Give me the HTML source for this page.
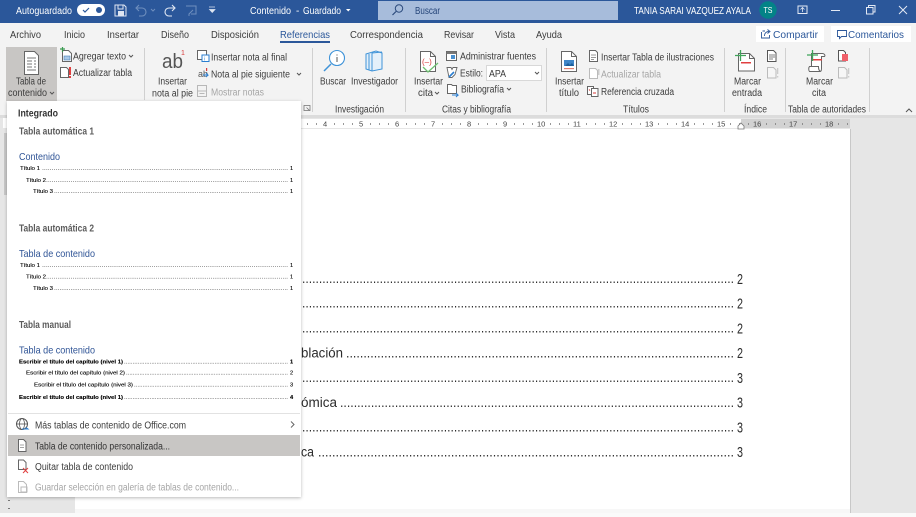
<!DOCTYPE html>
<html lang="es"><head><meta charset="utf-8"><title>Contenido - Word</title>
<style>
html,body{margin:0;padding:0;background:#fff;width:916px;height:517px;overflow:hidden}
svg{display:block;filter:blur(.35px)}
text{font-family:"Liberation Sans",sans-serif;font-size:10px;fill:#3c3c3c;white-space:pre}
.w{fill:#fff}.g{fill:#a6a6a6}.b{font-weight:bold}.blue{fill:#2f5496;font-size:10.5px}
.h{fill:#5c5c5c;font-weight:bold;font-size:10px}.t{font-size:5.6px;fill:#000;stroke:#000;stroke-width:.12}.d{font-size:5.6px;fill:#222}
.doc{font-size:13.5px;fill:#2c2c2c}.n{font-size:14.5px;fill:#2c2c2c}.r{font-size:7.5px;fill:#444}
</style></head><body>
<svg width="916" height="517" viewBox="0 0 916 517" xmlns="http://www.w3.org/2000/svg">
<defs><filter id="s" x="-5%" y="-5%" width="110%" height="110%"><feDropShadow dx="0" dy="1" stdDeviation="1.5" flood-color="#000" flood-opacity=".28"/></filter></defs>
<!-- backgrounds -->
<rect width="916" height="517" fill="#e6e6e6"/>
<rect y="513" width="916" height="4" fill="#fafafa"/>
<rect width="916" height="23" fill="#2b579a"/>
<rect y="23" width="916" height="92" fill="#f3f3f3"/>
<rect y="115" width="916" height="3" fill="#dcdcdc"/>
<!-- page -->
<rect x="75" y="129" width="775" height="384" fill="#fff"/>
<rect x="850" y="129" width="1" height="384" fill="#c8c8c8"/>
<rect x="75" y="509" width="775" height="4" fill="#f7f7f7"/>
<!-- ruler -->
<rect x="75" y="119" width="666" height="9" fill="#fff"/>
<rect x="741" y="119" width="109" height="9" fill="#d2d2d2"/>
<rect x="3" y="118" width="4" height="10" fill="#fff"/>
<rect x="4" y="133" width="3" height="62" fill="#c8c8c8"/>
<rect x="8" y="500" width="2" height="1" fill="#777"/><rect x="8" y="508" width="2" height="1" fill="#777"/>
<line x1="307" y1="124" x2="325" y2="124" stroke="#777" stroke-width="1.4" stroke-dasharray="1 8"/>
<line x1="334" y1="124" x2="850" y2="124" stroke="#777" stroke-width="1.4" stroke-dasharray="1 8 1 8 1 17"/>
<text class="r" x="323" y="126.500">4</text><text class="r" x="359" y="126.500">5</text><text class="r" x="395" y="126.500">6</text><text class="r" x="431" y="126.500">7</text><text class="r" x="467" y="126.500">8</text><text class="r" x="503" y="126.500">9</text><text class="r" x="537" y="126.500">10</text><text class="r" x="573" y="126.500">11</text><text class="r" x="609" y="126.500">12</text><text class="r" x="645" y="126.500">13</text><text class="r" x="681" y="126.500">14</text><text class="r" x="717" y="126.500">15</text><text class="r" x="753" y="126.500">16</text><text class="r" x="789" y="126.500">17</text><text class="r" x="825" y="126.500">18</text>
<path d="M738 129v-3l3-3 3 3v3z" fill="#fff" stroke="#777" stroke-width=".8"/>

<!-- title bar -->
<text class="w" x="16" y="14" textLength="56" lengthAdjust="spacingAndGlyphs">Autoguardado</text>
<rect x="77" y="4" width="28" height="12" rx="6" fill="#fff"/>
<path d="M83 10l2 2 4-4" fill="none" stroke="#2b579a" stroke-width="1.200"/><circle cx="99" cy="10" r="3" fill="#2b579a"/>
<path d="M115 5h9l2 2v9h-11z" fill="none" stroke="#dfe6f2" stroke-width="1"/><rect x="118" y="5" width="5" height="4" fill="none" stroke="#dfe6f2"/><rect x="118" y="11" width="6" height="5" fill="#dfe6f2"/>
<path d="M139 5l-3 3 3 3M137 8h5a4 4 0 0 1 0 8h-3" fill="none" stroke="#6f8fbe" stroke-width="1.100"/>
<path d="M151 9l2 2 2-2" fill="none" stroke="#6f8fbe"/>
<path d="M172 5l3 3-3 3M174 8h-5a4 4 0 0 0 0 8h3" fill="none" stroke="#e3e9f4" stroke-width="1.100"/>
<path d="M186 6h10v8h-5M193 10l-4 4v2" fill="none" stroke="#6f8fbe" stroke-width="1"/>
<path d="M209 7h6M209.500 9.500h5.500l-2.750 3z" fill="#dfe6f2" stroke="#dfe6f2" stroke-width=".7"/>
<text class="w" x="250" y="14" textLength="41" lengthAdjust="spacingAndGlyphs">Contenido</text>
<text class="w" x="296" y="14">-</text>
<text class="w" x="303" y="14" textLength="38" lengthAdjust="spacingAndGlyphs">Guardado</text>
<path d="M346 9h4.500l-2.250 2.500z" fill="#fff"/>
<rect x="378" y="1" width="240" height="19" fill="#a7bcdb"/>
<circle cx="399" cy="8.500" r="3.700" fill="none" stroke="#2b4a7c" stroke-width="1"/><path d="M396 11.500l-3.500 3.500" stroke="#2b4a7c" stroke-width="1.200"/>
<text x="415" y="14" textLength="25" lengthAdjust="spacingAndGlyphs" style="fill:#26467a">Buscar</text>
<text class="w" x="634" y="14" textLength="117" lengthAdjust="spacingAndGlyphs">TANIA SARAI VAZQUEZ AYALA</text>
<circle cx="768" cy="10" r="8.700" fill="#038387"/>
<text class="w" x="763.500" y="13" style="font-size:8px" textLength="9" lengthAdjust="spacingAndGlyphs">TS</text>
<rect x="798" y="6" width="9" height="7.500" fill="none" stroke="#e3e9f4"/><path d="M802.500 7.500v4.500M800.500 9.500l2-2 2 2" fill="none" stroke="#e3e9f4" stroke-width=".8"/>
<rect x="831" y="10" width="9" height="1" fill="#e3e9f4"/>
<rect x="866.500" y="7.500" width="6.500" height="6.500" fill="none" stroke="#e3e9f4"/><path d="M868.500 7.500v-2h6.500v6.500h-2" fill="none" stroke="#e3e9f4"/>
<path d="M899 6l8 8M907 6l-8 8" stroke="#e3e9f4" stroke-width="1"/>

<!-- tabs -->
<g style="font-size:10.500px">
<text x="10" y="38" textLength="31" lengthAdjust="spacingAndGlyphs" style="font-size:10.500px">Archivo</text>
<text x="64" y="38" textLength="21" lengthAdjust="spacingAndGlyphs" style="font-size:10.500px">Inicio</text>
<text x="107" y="38" textLength="32" lengthAdjust="spacingAndGlyphs" style="font-size:10.500px">Insertar</text>
<text x="161" y="38" textLength="28" lengthAdjust="spacingAndGlyphs" style="font-size:10.500px">Diseño</text>
<text x="211" y="38" textLength="48" lengthAdjust="spacingAndGlyphs" style="font-size:10.500px">Disposición</text>
<text x="280" y="38" textLength="50" lengthAdjust="spacingAndGlyphs" style="fill:#2b579a;font-size:10.500px">Referencias</text>
<text x="350" y="38" textLength="73" lengthAdjust="spacingAndGlyphs" style="font-size:10.500px">Correspondencia</text>
<text x="444" y="38" textLength="30" lengthAdjust="spacingAndGlyphs" style="font-size:10.500px">Revisar</text>
<text x="495" y="38" textLength="20" lengthAdjust="spacingAndGlyphs" style="font-size:10.500px">Vista</text>
<text x="536" y="38" textLength="26" lengthAdjust="spacingAndGlyphs" style="font-size:10.500px">Ayuda</text>
</g>
<rect x="280" y="41" width="50" height="2" fill="#2b579a"/>
<rect x="756" y="26" width="68" height="16" fill="#fff"/>
<path d="M762.500 31h2.500M761.500 32v6h8V35M764.500 36c0-3 2-4.500 4.500-4.500M767.500 29.500l2.500 2-2.500 2" fill="none" stroke="#2b579a" stroke-width=".9"/>
<text x="773" y="38" textLength="45" lengthAdjust="spacingAndGlyphs" style="fill:#2b579a;font-size:10.500px">Compartir</text>
<rect x="831" y="26" width="80" height="16" fill="#fff"/>
<path d="M837.500 30.500h9v6h-5l-2 2v-2h-2z" fill="none" stroke="#2b579a" stroke-width=".9"/>
<text x="848" y="38" textLength="56" lengthAdjust="spacingAndGlyphs" style="fill:#2b579a;font-size:10.500px">Comentarios</text>

<!-- ribbon group 1 -->
<rect x="6" y="47" width="51" height="54" fill="#c8c6c4"/>
<path d="M24.500 51.500h10l4 4v19h-14z" fill="#fff" stroke="#666"/><path d="M27 58h9M27 61h5M34 61h2M27 64h5M34 64h2M27 67h5M34 67h2M27 70h9" stroke="#777" stroke-width=".9"/>
<text x="16" y="84.500" textLength="30" lengthAdjust="spacingAndGlyphs">Tabla de</text>
<text x="8" y="96" textLength="39" lengthAdjust="spacingAndGlyphs">contenido</text>
<path d="M50 92l2 2 2-2" fill="none" stroke="#555"/>
<path d="M62.500 50.500h6l3 3v8h-9z" fill="#fff" stroke="#666"/><path d="M60 49h5M62.500 47v5" stroke="#3a9a50" stroke-width="1.200"/><rect x="64" y="56" width="6" height="4" fill="#a8c8e8" stroke="#4a7db5" stroke-width=".6"/>
<text x="73" y="59.500" textLength="53" lengthAdjust="spacingAndGlyphs">Agregar texto</text>
<path d="M129 55l2 2 2-2" fill="none" stroke="#555"/>
<path d="M60.500 67.500h6l2 2v8h-8z" fill="#fff" stroke="#666"/><rect x="69" y="67" width="2" height="8" fill="#e04040"/><rect x="69" y="76" width="2" height="2" fill="#e04040"/>
<text x="73" y="76" textLength="59" lengthAdjust="spacingAndGlyphs">Actualizar tabla</text>
<rect x="144" y="48" width="1" height="52" fill="#d0d0d0"/>

<!-- notas -->
<text x="162" y="68" style="font-size:20px;fill:#555" textLength="21" lengthAdjust="spacingAndGlyphs">ab</text>
<text x="181" y="55" style="font-size:7px;fill:#d83b3b">1</text>
<text x="158" y="84.500" textLength="29" lengthAdjust="spacingAndGlyphs">Insertar</text>
<text x="152" y="96.500" textLength="41" lengthAdjust="spacingAndGlyphs">nota al pie</text>
<rect x="197.500" y="50.500" width="9" height="9" fill="#fff" stroke="#666"/><rect x="202" y="55" width="7" height="6.500" fill="#fff" stroke="#2a7ed0"/><text x="204" y="60.500" style="font-size:5px;fill:#2a7ed0">i</text>
<text x="211" y="60.500" textLength="76" lengthAdjust="spacingAndGlyphs">Insertar nota al final</text>
<text x="198" y="77" style="font-size:9px;fill:#555">ab</text><rect x="206" y="68" width="1.200" height="3" fill="#d83b3b"/><path d="M203 75h5l-2-2M208 75l-2 2" fill="none" stroke="#2a7ed0" stroke-width=".9"/>
<text x="211" y="77.500" textLength="79" lengthAdjust="spacingAndGlyphs">Nota al pie siguiente</text>
<path d="M297 73l2 2 2-2" fill="none" stroke="#555"/>
<rect x="197.500" y="85.500" width="9" height="11" fill="none" stroke="#b8b8b8"/><path d="M198 91h8M199.500 93.500h5" stroke="#b8b8b8"/>
<text class="g" x="211" y="95.500" textLength="53" lengthAdjust="spacingAndGlyphs">Mostrar notas</text>
<rect x="304" y="105.500" width="6" height="5" fill="none" stroke="#777" stroke-width=".8"/><path d="M306.500 107.500l3 3" stroke="#777" stroke-width=".8"/>
<rect x="312" y="48" width="1" height="64" fill="#d0d0d0"/>

<!-- investigacion -->
<circle cx="337" cy="58" r="7.500" fill="#fff" stroke="#3f93d8" stroke-width="1.100"/><path d="M331 64l-7 7" stroke="#3f93d8" stroke-width="1.500"/><path d="M337 54.500v1M337 57v5" stroke="#555" stroke-width="1"/>
<path d="M366 54l10-3 6 2v16l-10 2-6-2z" fill="#e4f0fa" stroke="#3f93d8"/><path d="M369 54v16M372 53v18M372 53l10-1" fill="none" stroke="#3f93d8"/>
<text x="320" y="84.500" textLength="26" lengthAdjust="spacingAndGlyphs">Buscar</text>
<text x="351" y="84.500" textLength="47" lengthAdjust="spacingAndGlyphs">Investigador</text>
<text x="335" y="112.500" textLength="49" lengthAdjust="spacingAndGlyphs">Investigación</text>
<rect x="405" y="48" width="1" height="64" fill="#d0d0d0"/>

<!-- citas -->
<path d="M420.500 51.500h10l5 5v15h-15z" fill="#fff" stroke="#666"/><path d="M430.500 51.500v5h5" fill="none" stroke="#666"/>
<text x="422" y="64.500" style="font-size:8px;fill:#d83b3b">(–)</text><path d="M423 67l5 5 10-9" fill="none" stroke="#6cc070" stroke-width="1.300"/>
<text x="414" y="84.500" textLength="29" lengthAdjust="spacingAndGlyphs">Insertar</text>
<text x="418" y="96" textLength="15" lengthAdjust="spacingAndGlyphs">cita</text>
<path d="M435 92l2 2 2-2" fill="none" stroke="#555"/>
<rect x="446.500" y="51.500" width="10" height="9" fill="#fff" stroke="#666"/><rect x="446.500" y="51.500" width="10" height="2.500" fill="#777"/><rect x="451" y="55" width="4" height="4" fill="#4a90d0"/>
<text x="460" y="59.500" textLength="76" lengthAdjust="spacingAndGlyphs">Administrar fuentes</text>
<path d="M447 67.500h4l1 2 1-2h4l-2 7-3 3h-3z" fill="#fff" stroke="#666" stroke-width=".9"/><path d="M449 77l5-5" stroke="#2a7ed0" stroke-width="1.600"/>
<text x="460" y="76.500" textLength="23" lengthAdjust="spacingAndGlyphs">Estilo:</text>
<rect x="486.500" y="65.500" width="55" height="15" fill="#fff" stroke="#d8d8d8"/>
<text x="489" y="77" textLength="17" lengthAdjust="spacingAndGlyphs">APA</text>
<path d="M535 72l2 2 2-2" fill="none" stroke="#555"/>
<path d="M447.500 84.500h4l1 1h4v8h-9z" fill="#fff" stroke="#666"/><path d="M452 95h6l-2-2M458 95l-2 2" fill="none" stroke="#2a7ed0"/>
<text x="461" y="92.500" textLength="43" lengthAdjust="spacingAndGlyphs">Bibliografía</text>
<path d="M507 88l2 2 2-2" fill="none" stroke="#555"/>
<text x="442" y="112.500" textLength="69" lengthAdjust="spacingAndGlyphs">Citas y bibliografía</text>
<rect x="546" y="48" width="1" height="64" fill="#d0d0d0"/>

<!-- titulos -->
<path d="M561.500 51.500h10l5 5v15h-15z" fill="#fff" stroke="#666"/><path d="M571.500 51.500v5h5" fill="none" stroke="#666"/><rect x="564" y="60" width="10" height="6" fill="#3f86c8"/><path d="M565 66l3-3 2 2 2-2 2 3z" fill="#1f5f9a"/><rect x="564" y="68" width="10" height="1.200" fill="#e08070"/>
<text x="555" y="84.500" textLength="29" lengthAdjust="spacingAndGlyphs">Insertar</text>
<text x="559" y="96" textLength="20" lengthAdjust="spacingAndGlyphs">título</text>
<path d="M589.500 50.500h6l2 2v9h-8z" fill="#fff" stroke="#666"/><path d="M591 55h5M591 57.500h5M591 59.500h3" stroke="#777" stroke-width=".7"/>
<text x="601" y="60.500" textLength="113" lengthAdjust="spacingAndGlyphs">Insertar Tabla de ilustraciones</text>
<path d="M589.500 68.500h6l2 2v8h-8z" fill="#fff" stroke="#bbb"/><rect x="598" y="69" width="1.500" height="6" fill="#ccc"/>
<text class="g" x="601" y="77.500" textLength="60" lengthAdjust="spacingAndGlyphs">Actualizar tabla</text>
<rect x="587.500" y="86.500" width="6" height="8" fill="#fff" stroke="#666"/><rect x="591.500" y="88.500" width="6.500" height="8" fill="#fff" stroke="#666"/><path d="M589 89.500l1 1" stroke="#d83b3b"/><path d="M593 93h3" stroke="#d83b3b"/>
<text x="601" y="95" textLength="73" lengthAdjust="spacingAndGlyphs">Referencia cruzada</text>
<text x="623" y="112.500" textLength="26" lengthAdjust="spacingAndGlyphs">Títulos</text>
<rect x="724" y="48" width="1" height="64" fill="#d0d0d0"/>

<!-- indice -->
<path d="M738.500 53.500h11l5 5v12.500h-16z" fill="#fff" stroke="#666"/><path d="M749.500 53.500v5h5" fill="none" stroke="#666"/>
<path d="M735 55.500h11M740.500 50v11" stroke="#3fa55a" stroke-width="1.300"/><rect x="741" y="62" width="10" height="1.500" fill="#e04040"/>
<text x="734" y="84.500" textLength="27" lengthAdjust="spacingAndGlyphs">Marcar</text>
<text x="732" y="96" textLength="30" lengthAdjust="spacingAndGlyphs">entrada</text>
<path d="M767.500 50.500h6l2.500 2.500v8.500h-8.500z" fill="#fff" stroke="#555"/><path d="M769 55h6M769 57h6M769 59h4" stroke="#555" stroke-width=".7"/>
<path d="M767.500 67.500h6l2.500 2.500v8h-8.500z" fill="#f6f6f6" stroke="#bbb"/><rect x="777" y="68" width="1.300" height="6" fill="#ccc"/><rect x="777" y="76" width="1.300" height="1.500" fill="#ccc"/>
<text x="744" y="112.500" textLength="23" lengthAdjust="spacingAndGlyphs">Índice</text>
<rect x="785" y="48" width="1" height="64" fill="#d0d0d0"/>

<!-- autoridades -->
<path d="M811.500 53.500h11c2 0 3 2 2 3h-3v12c0 3-1 3-2 3h-8z" fill="#fff" stroke="#666"/>
<path d="M809.500 66.500h9c0 2 0 4 2 5h-11c-1-1-1-4 0-5z" fill="#fff" stroke="#666"/>
<path d="M807 55h11M812.500 50v11" stroke="#3fa55a" stroke-width="1.300"/><rect x="813" y="59" width="9" height="1.500" fill="#e04040"/>
<text x="806" y="84.500" textLength="27" lengthAdjust="spacingAndGlyphs">Marcar</text>
<text x="812" y="96" textLength="14" lengthAdjust="spacingAndGlyphs">cita</text>
<path d="M838.500 50.500h5l2 2v8.500h-7z" fill="#fff" stroke="#555"/><rect x="842" y="54" width="6" height="7" fill="#f0606a"/>
<path d="M838.500 67.500h6l2.500 2.500v8h-8.500z" fill="#f6f6f6" stroke="#bbb"/><rect x="848" y="68" width="1.300" height="6" fill="#ccc"/><rect x="848" y="76" width="1.300" height="1.500" fill="#ccc"/>
<text x="788" y="112.500" textLength="78" lengthAdjust="spacingAndGlyphs">Tabla de autoridades</text>
<rect x="869" y="48" width="1" height="64" fill="#d0d0d0"/>
<path d="M906 112l3-3 3 3" fill="none" stroke="#555"/>

<!-- document -->
<g>
<text class="doc" x="302" y="283" textLength="432" lengthAdjust="spacingAndGlyphs">................................................................................................................................</text>
<text class="n" x="737" y="284" textLength="6" lengthAdjust="spacingAndGlyphs">2</text>
<text class="doc" x="302" y="307.500" textLength="432" lengthAdjust="spacingAndGlyphs">................................................................................................................................</text>
<text class="n" x="737" y="308.500" textLength="6" lengthAdjust="spacingAndGlyphs">2</text>
<text class="doc" x="302" y="332.500" textLength="432" lengthAdjust="spacingAndGlyphs">................................................................................................................................</text>
<text class="n" x="737" y="333.500" textLength="6" lengthAdjust="spacingAndGlyphs">2</text>
<text class="doc" x="301" y="357.500" textLength="42" lengthAdjust="spacingAndGlyphs">blación</text>
<text class="doc" x="346" y="357.500" textLength="388" lengthAdjust="spacingAndGlyphs">................................................................................................................</text>
<text class="n" x="737" y="358" textLength="6" lengthAdjust="spacingAndGlyphs">2</text>
<text class="doc" x="302" y="382" textLength="432" lengthAdjust="spacingAndGlyphs">................................................................................................................................</text>
<text class="n" x="737" y="383" textLength="6" lengthAdjust="spacingAndGlyphs">3</text>
<text class="doc" x="301" y="407" textLength="36" lengthAdjust="spacingAndGlyphs">ómica</text>
<text class="doc" x="340" y="407" textLength="394" lengthAdjust="spacingAndGlyphs">...................................................................................................................</text>
<text class="n" x="737" y="407.500" textLength="6" lengthAdjust="spacingAndGlyphs">3</text>
<text class="doc" x="302" y="431.500" textLength="432" lengthAdjust="spacingAndGlyphs">................................................................................................................................</text>
<text class="n" x="737" y="432.500" textLength="6" lengthAdjust="spacingAndGlyphs">3</text>
<text class="doc" x="301" y="456.500" textLength="13" lengthAdjust="spacingAndGlyphs">ca</text>
<text class="doc" x="318" y="456.500" textLength="416" lengthAdjust="spacingAndGlyphs">.......................................................................................................................</text>
<text class="n" x="737" y="457" textLength="6" lengthAdjust="spacingAndGlyphs">3</text>
</g>

<!-- menu -->
<rect x="7" y="101" width="294" height="396" fill="#fff" filter="url(#s)"/>
<text x="18" y="116.500" class="b" textLength="40" lengthAdjust="spacingAndGlyphs" style="fill:#333">Integrado</text>
<text class="h" x="19" y="134.500" textLength="75" lengthAdjust="spacingAndGlyphs">Tabla automática 1</text>
<text class="blue" x="19" y="160" textLength="41" lengthAdjust="spacingAndGlyphs">Contenido</text>
<text class="t" x="20" y="170" textLength="20" lengthAdjust="spacingAndGlyphs">Título 1</text><text class="d" x="42" y="170" textLength="246" lengthAdjust="spacingAndGlyphs">................................................................................................................................</text><text class="t" x="290" y="170">1</text>
<text class="t" x="26" y="182" textLength="20" lengthAdjust="spacingAndGlyphs">Título 2</text><text class="d" x="46" y="182" textLength="242" lengthAdjust="spacingAndGlyphs">................................................................................................................................</text><text class="t" x="290" y="182">1</text>
<text class="t" x="33" y="193" textLength="20" lengthAdjust="spacingAndGlyphs">Título 3</text><text class="d" x="54" y="193" textLength="234" lengthAdjust="spacingAndGlyphs">................................................................................................................................</text><text class="t" x="290" y="193">1</text>
<text class="h" x="19" y="231.500" textLength="75" lengthAdjust="spacingAndGlyphs">Tabla automática 2</text>
<text class="blue" x="19" y="257" textLength="76" lengthAdjust="spacingAndGlyphs">Tabla de contenido</text>
<text class="t" x="20" y="267" textLength="20" lengthAdjust="spacingAndGlyphs">Título 1</text><text class="d" x="42" y="267" textLength="246" lengthAdjust="spacingAndGlyphs">................................................................................................................................</text><text class="t" x="290" y="267">1</text>
<text class="t" x="26" y="278.500" textLength="20" lengthAdjust="spacingAndGlyphs">Título 2</text><text class="d" x="46" y="278.500" textLength="242" lengthAdjust="spacingAndGlyphs">................................................................................................................................</text><text class="t" x="290" y="278.500">1</text>
<text class="t" x="33" y="290" textLength="20" lengthAdjust="spacingAndGlyphs">Título 3</text><text class="d" x="54" y="290" textLength="234" lengthAdjust="spacingAndGlyphs">................................................................................................................................</text><text class="t" x="290" y="290">1</text>
<text class="h" x="19" y="328" textLength="52" lengthAdjust="spacingAndGlyphs">Tabla manual</text>
<text class="blue" x="19" y="353.500" textLength="76" lengthAdjust="spacingAndGlyphs">Tabla de contenido</text>
<text class="t b" x="19" y="363.500" textLength="104" lengthAdjust="spacingAndGlyphs">Escribir el título del capítulo (nivel 1)</text><text class="d" x="124" y="363.500" textLength="164" lengthAdjust="spacingAndGlyphs">................................................................................................</text><text class="t b" x="290" y="363.500">1</text>
<text class="t" x="26" y="374.500" textLength="99" lengthAdjust="spacingAndGlyphs">Escribir el título del capítulo (nivel 2)</text><text class="d" x="126" y="374.500" textLength="162" lengthAdjust="spacingAndGlyphs">................................................................................................</text><text class="t" x="290" y="374.500">2</text>
<text class="t" x="34" y="386.500" textLength="99" lengthAdjust="spacingAndGlyphs">Escribir el título del capítulo (nivel 3)</text><text class="d" x="134" y="386.500" textLength="154" lengthAdjust="spacingAndGlyphs">..........................................................................................</text><text class="t" x="290" y="386.500">3</text>
<text class="t b" x="19" y="399" textLength="104" lengthAdjust="spacingAndGlyphs">Escribir el título del capítulo (nivel 1)</text><text class="d" x="124" y="399" textLength="164" lengthAdjust="spacingAndGlyphs">................................................................................................</text><text class="t b" x="290" y="399">4</text>
<rect x="8" y="413" width="292" height="1" fill="#e2e2e2"/>
<circle cx="22" cy="424" r="5.500" fill="none" stroke="#555"/><ellipse cx="22" cy="424" rx="2.500" ry="5.500" fill="none" stroke="#555" stroke-width=".8"/><path d="M16.500 424h11" stroke="#555" stroke-width=".8"/><path d="M22 429h6l-2-1.500" fill="none" stroke="#2a7ed0"/>
<text x="35" y="428.500" textLength="151" lengthAdjust="spacingAndGlyphs">Más tablas de contenido de Office.com</text>
<path d="M291 421.500l3 3-3 3" fill="none" stroke="#666"/>
<rect x="8" y="435" width="292" height="21" fill="#c8c6c4"/>
<path d="M18.500 439.500h5l2.500 2.500v9.500h-7.500z" fill="#fff" stroke="#666"/><path d="M20 445h4M20 447.500h4" stroke="#888" stroke-width=".7"/>
<text x="35" y="449.500" textLength="135" lengthAdjust="spacingAndGlyphs" style="fill:#333">Tabla de contenido personalizada...</text>
<path d="M18.500 460h5l2.500 2.500v7h-7.500z" fill="#fff" stroke="#666"/><path d="M23 468l5 5M28 468l-5 5" stroke="#e04040" stroke-width="1"/>
<text x="35" y="470" textLength="98" lengthAdjust="spacingAndGlyphs">Quitar tabla de contenido</text>
<path d="M18.500 481.500h5l3 3v8h-8z" fill="#fff" stroke="#bbb"/><rect x="21" y="487" width="6" height="5" fill="none" stroke="#bbb"/>
<text class="g" x="35" y="490.500" textLength="204" lengthAdjust="spacingAndGlyphs">Guardar selección en galería de tablas de contenido...</text>
</svg>
</body></html>
